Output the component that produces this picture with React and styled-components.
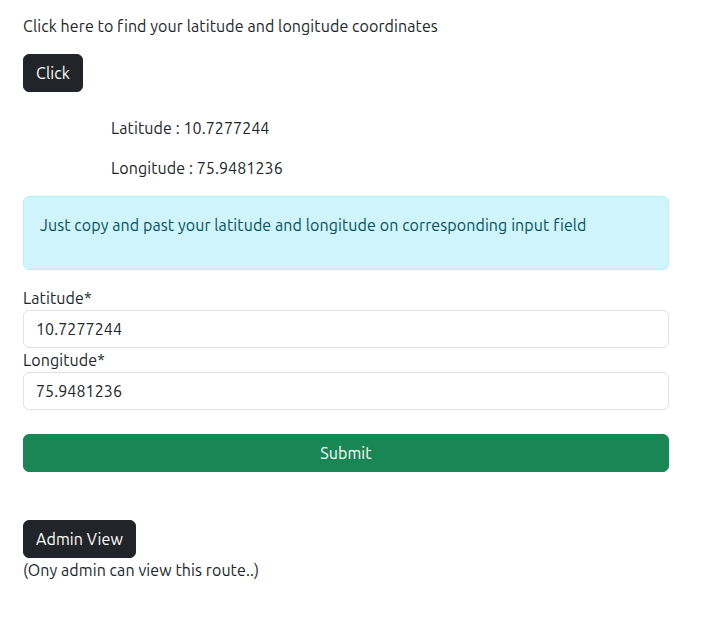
import React from "react";
import styled, { createGlobalStyle } from "styled-components";

const Global = createGlobalStyle`
  * { box-sizing: border-box; }
  body {
    margin: 0;
    font-family: Ubuntu, "Liberation Sans", Arial, sans-serif;
    font-size: 16px;
    line-height: 24px;
    letter-spacing: 0.09px;
    color: #212529;
    background: #fff;
  }
`;

const Page = styled.div`
  width: 646px;
  margin-left: 23px;
  padding-top: 14px;
`;

const Text = styled.p`
  margin: 0 0 ${(p) => p.$mb ?? 16}px;
  padding-left: ${(p) => p.$indent ?? 0}px;
`;

const Button = styled.button`
  display: ${(p) => (p.$block ? "block" : "inline-block")};
  width: ${(p) => (p.$block ? "100%" : "auto")};
  font: inherit;
  letter-spacing: inherit;
  line-height: 24px;
  padding: 6px 12px;
  border: 1px solid ${(p) => p.$bg};
  border-radius: 6px;
  background: ${(p) => p.$bg};
  color: #fff;
  cursor: pointer;
`;

const Row = styled.div`
  display: flex;
  margin-top: ${(p) => p.$mt ?? 0}px;
  margin-bottom: ${(p) => p.$mb ?? 0}px;
`;

const Alert = styled.div`
  background: #cff4fc;
  border: 1px solid #b6effb;
  color: #055160;
  border-radius: 6px;
  padding: 16px;
  margin-bottom: 16px;
`;

const Label = styled.label`
  display: block;
`;

const Input = styled.input`
  display: block;
  width: 100%;
  font: inherit;
  letter-spacing: inherit;
  line-height: 24px;
  padding: 6px 12px;
  color: #212529;
  border: 1px solid #dee2e6;
  border-radius: 6px;
  background: #fff;
  outline: none;
`;

export default function App() {
  return (
    <>
      <Global />
      <Page>
        <Text>Click here to find your latitude and longitude coordinates</Text>
        <Row $mb={24}>
          <Button $bg="#212529">Click</Button>
        </Row>
        <Text $indent={88}>Latitude : 10.7277244</Text>
        <Text $indent={88}>Longitude : 75.9481236</Text>
        <Alert>
          <Text>Just copy and past your latitude and longitude on corresponding input field</Text>
        </Alert>
        <Label>Latitude*</Label>
        <Input defaultValue="10.7277244" />
        <Label>Longitude*</Label>
        <Input defaultValue="75.9481236" />
        <Row $mt={24} $mb={48}>
          <Button $block $bg="#198754">Submit</Button>
        </Row>
        <Row>
          <Button $bg="#212529">Admin View</Button>
        </Row>
        <Text>(Ony admin can view this route..)</Text>
      </Page>
    </>
  );
}
